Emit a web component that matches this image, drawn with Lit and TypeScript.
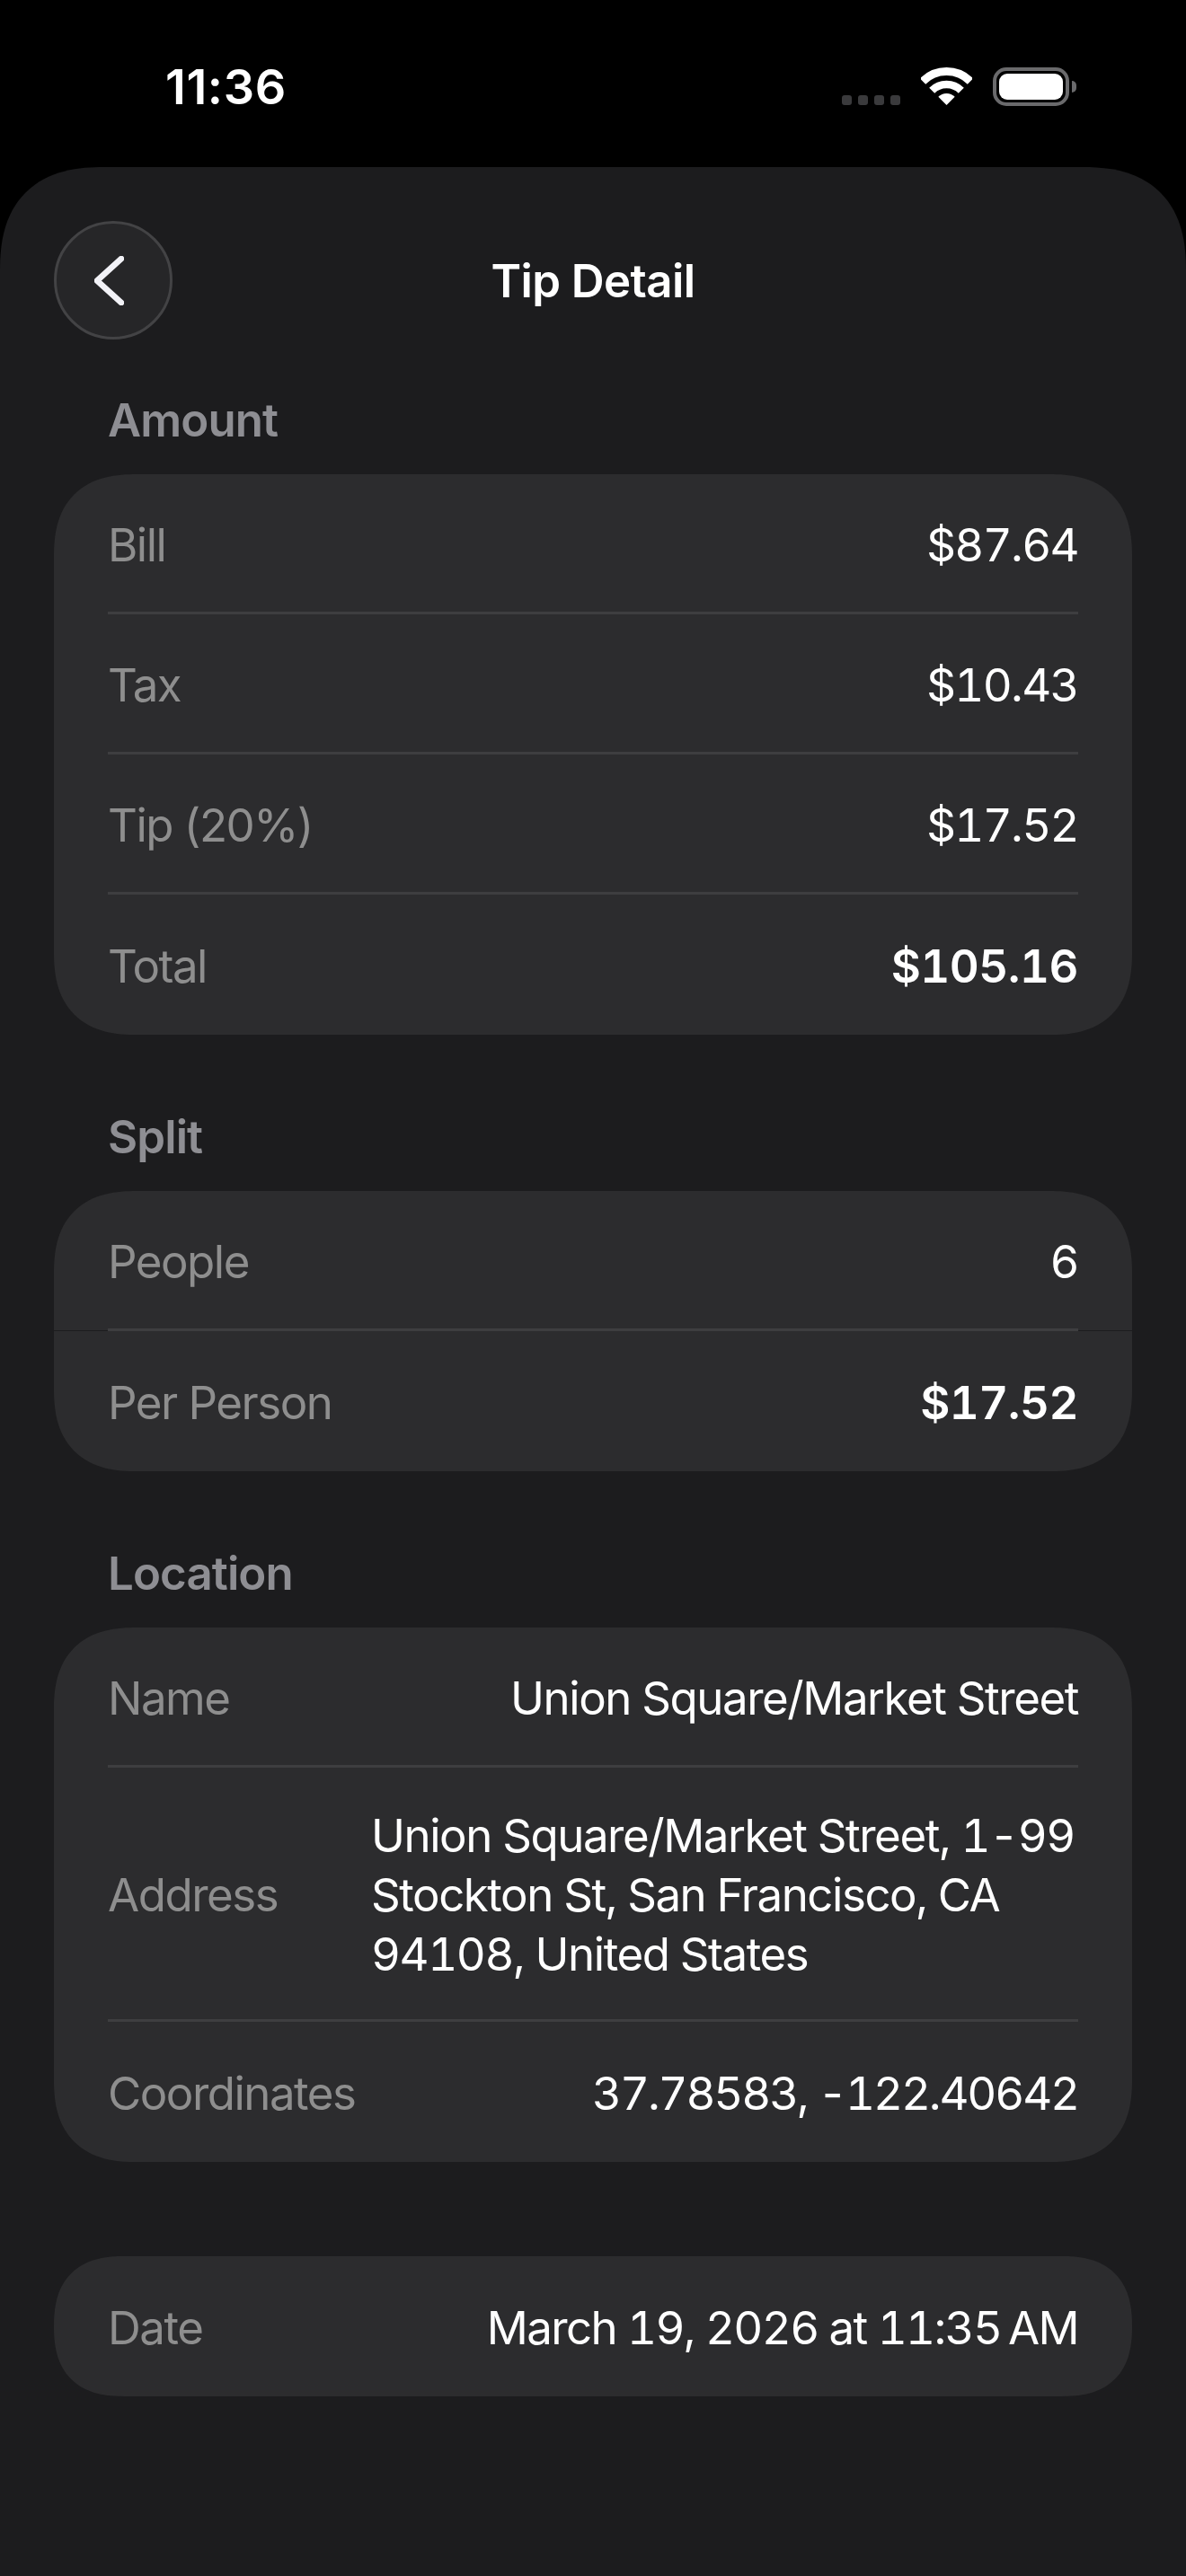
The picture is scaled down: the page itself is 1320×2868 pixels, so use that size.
import { LitElement, html, css, svg } from 'lit';
import { customElement } from 'lit/decorators.js';

interface Row {
  label: string;
  value: string;
  strong?: boolean;
  wrap?: boolean;
  num?: boolean;
  tight?: boolean;
}

const AMOUNT: Row[] = [
  { label: 'Bill', value: '$87.64', num: true },
  { label: 'Tax', value: '$10.43', num: true },
  { label: 'Tip (20%)', value: '$17.52', num: true },
  { label: 'Total', value: '$105.16', num: true, strong: true },
];

const SPLIT: Row[] = [
  { label: 'People', value: '6', num: true },
  { label: 'Per Person', value: '$17.52', num: true, strong: true },
];

const LOCATION: Row[] = [
  { label: 'Name', value: 'Union Square/Market Street' },
  { label: 'Address', value: 'Union Square/Market Street, 1-99\nStockton St, San Francisco, CA\n94108, United States', wrap: true },
  { label: 'Coordinates', value: '37.78583, -122.40642', num: true, tight: true },
];

const DATE: Row[] = [{ label: 'Date', value: 'March 19, 2026 at 11:35\u202fAM', num: true }];

@customElement('app-root')
export class AppRoot extends LitElement {
  static styles = css`
    :host {
      display: flex;
      flex-direction: column;
      width: 1320px;
      height: 2868px;
      background: #000;
      font-family: Inter, 'Liberation Sans', sans-serif;
      overflow: hidden;
    }

    .status {
      flex: none;
      height: 186px;
      display: flex;
      justify-content: space-between;
      box-sizing: border-box;
      padding: 0 122px 0 184px;
    }

    .time {
      margin-top: 67px;
      font-size: 54px;
      line-height: 60px;
      font-weight: 600;
      color: #fff;
      letter-spacing: 0.6px;
    }

    .indicators {
      display: flex;
      align-items: flex-start;
      margin-top: 75px;
    }

    .dots {
      display: flex;
      gap: 7px;
      margin: 31px 23px 0 0;
    }

    .dots span {
      width: 11px;
      height: 11px;
      border-radius: 3px;
      background: #3a3a3c;
    }

    .wifi {
      display: block;
      width: 57px;
      height: 42px;
      margin-right: 23px;
    }

    .battery {
      box-sizing: border-box;
      width: 85px;
      height: 43px;
      padding: 3px;
      border: 4px solid #6a6a6c;
      border-radius: 15px;
    }

    .battery i {
      display: block;
      height: 100%;
      border-radius: 9px;
      background: #fff;
    }

    .nub {
      width: 5px;
      height: 13px;
      margin: 15px 0 0 3px;
      border-radius: 0 5px 5px 0;
      background: #6a6a6c;
    }

    .sheet {
      flex: 1;
      box-sizing: border-box;
      padding: 60px 60px 0;
      background: #1c1c1e;
      border-radius: 116px 116px 0 0;
      corner-shape: superellipse(1.3);
    }

    .nav {
      display: grid;
      grid-template-columns: 132px 1fr 132px;
      align-items: center;
      margin-bottom: 60px;
    }

    .back {
      box-sizing: border-box;
      width: 132px;
      height: 132px;
      display: flex;
      align-items: center;
      justify-content: center;
      padding: 0 10px 0 0;
      border: 3px solid #434345;
      border-radius: 50%;
      background: #262628;
    }

    .back svg {
      display: block;
      width: 33px;
      height: 55px;
    }

    .title {
      padding-top: 2px;
      text-align: center;
      font-size: 51px;
      line-height: 60px;
      font-weight: 600;
      color: #fff;
      letter-spacing: -0.6px;
    }

    .heading {
      margin: 0 0 30px 60px;
      font-size: 51px;
      line-height: 60px;
      font-weight: 600;
      color: #8e8e93;
      letter-spacing: -0.9px;
    }

    .card {
      background: #2c2c2e;
      border-radius: 92px;
      corner-shape: superellipse(1.3);
      margin-bottom: 84px;
    }

    .card.loose {
      margin-bottom: 105px;
    }

    .row {
      position: relative;
      box-sizing: border-box;
      min-height: 156px;
      margin: 0 60px;
      padding: 43px 0 39px;
      display: flex;
      align-items: center;
      justify-content: space-between;
      gap: 16px;
      border-bottom: 3px solid #3e3e40;
      font-size: 51px;
      line-height: 66px;
      font-weight: 380;
    }

    .row:last-child {
      border-bottom: 0;
    }

    /* hairline seam the reference shows beside the split divider */
    .row.seam::before,
    .row.seam::after {
      content: '';
      position: absolute;
      bottom: -3px;
      width: 60px;
      height: 1px;
      background: #1c1c1e;
    }

    .row.seam::before {
      left: -60px;
    }

    .row.seam::after {
      right: -60px;
    }

    .label {
      flex: none;
      color: #8e8e8e;
      letter-spacing: -1.5px;
    }

    .value {
      color: #fff;
      text-align: right;
      white-space: nowrap;
      font-variant-numeric: tabular-nums;
      letter-spacing: -1.45px;
    }

    .value.num {
      letter-spacing: -1.65px;
    }

    .value.tight {
      letter-spacing: -2.15px;
    }

    .value.wrap {
      width: 787px;
      text-align: left;
      white-space: pre-line;
    }

    .value.strong {
      font-weight: 600;
      letter-spacing: -0.5px;
    }
  `;

  private renderCard(rows: Row[], extra = '') {
    return html`
      <div class="card ${extra === 'loose' ? 'loose' : ''}">
        ${rows.map(
          (r, i) => html`
            <div class="row ${extra === 'seam' && i === 0 ? 'seam' : ''}">
              <span class="label">${r.label}</span>
              <span class="value ${r.strong ? 'strong' : ''} ${r.wrap ? 'wrap' : ''} ${r.num ? 'num' : ''} ${r.tight ? 'tight' : ''}">${r.value}</span>
            </div>
          `
        )}
      </div>
    `;
  }

  render() {
    return html`
      <div class="status">
        <div class="time">11:36</div>
        <div class="indicators">
          <div class="dots"><span></span><span></span><span></span><span></span></div>
          <svg class="wifi" viewBox="0 0 57 42" fill="none" stroke="#fff">
            ${svg`
              <path d="M2 15.5A37.5 37.5 0 0 1 55 15.5" stroke-width="9" />
              <path d="M12.2 25.7A23 23 0 0 1 44.8 25.7" stroke-width="8.5" />
              <path d="M28.5 42L19.3 32.8A13 13 0 0 1 37.7 32.8Z" fill="#fff" stroke="none" />
            `}
          </svg>
          <div class="battery"><i></i></div>
          <div class="nub"></div>
        </div>
      </div>
      <div class="sheet">
        <div class="nav">
          <div class="back">
            <svg viewBox="0 0 33 55" fill="none" stroke="#f2f2f7" stroke-width="6.5" stroke-linecap="round" stroke-linejoin="round">
              ${svg`<path d="M30 3L3 27.5L30 52" />`}
            </svg>
          </div>
          <div class="title">Tip Detail</div>
          <div></div>
        </div>
        <div class="heading">Amount</div>
        ${this.renderCard(AMOUNT)}
        <div class="heading">Split</div>
        ${this.renderCard(SPLIT, 'seam')}
        <div class="heading">Location</div>
        ${this.renderCard(LOCATION, 'loose')}
        ${this.renderCard(DATE)}
      </div>
    `;
  }
}
